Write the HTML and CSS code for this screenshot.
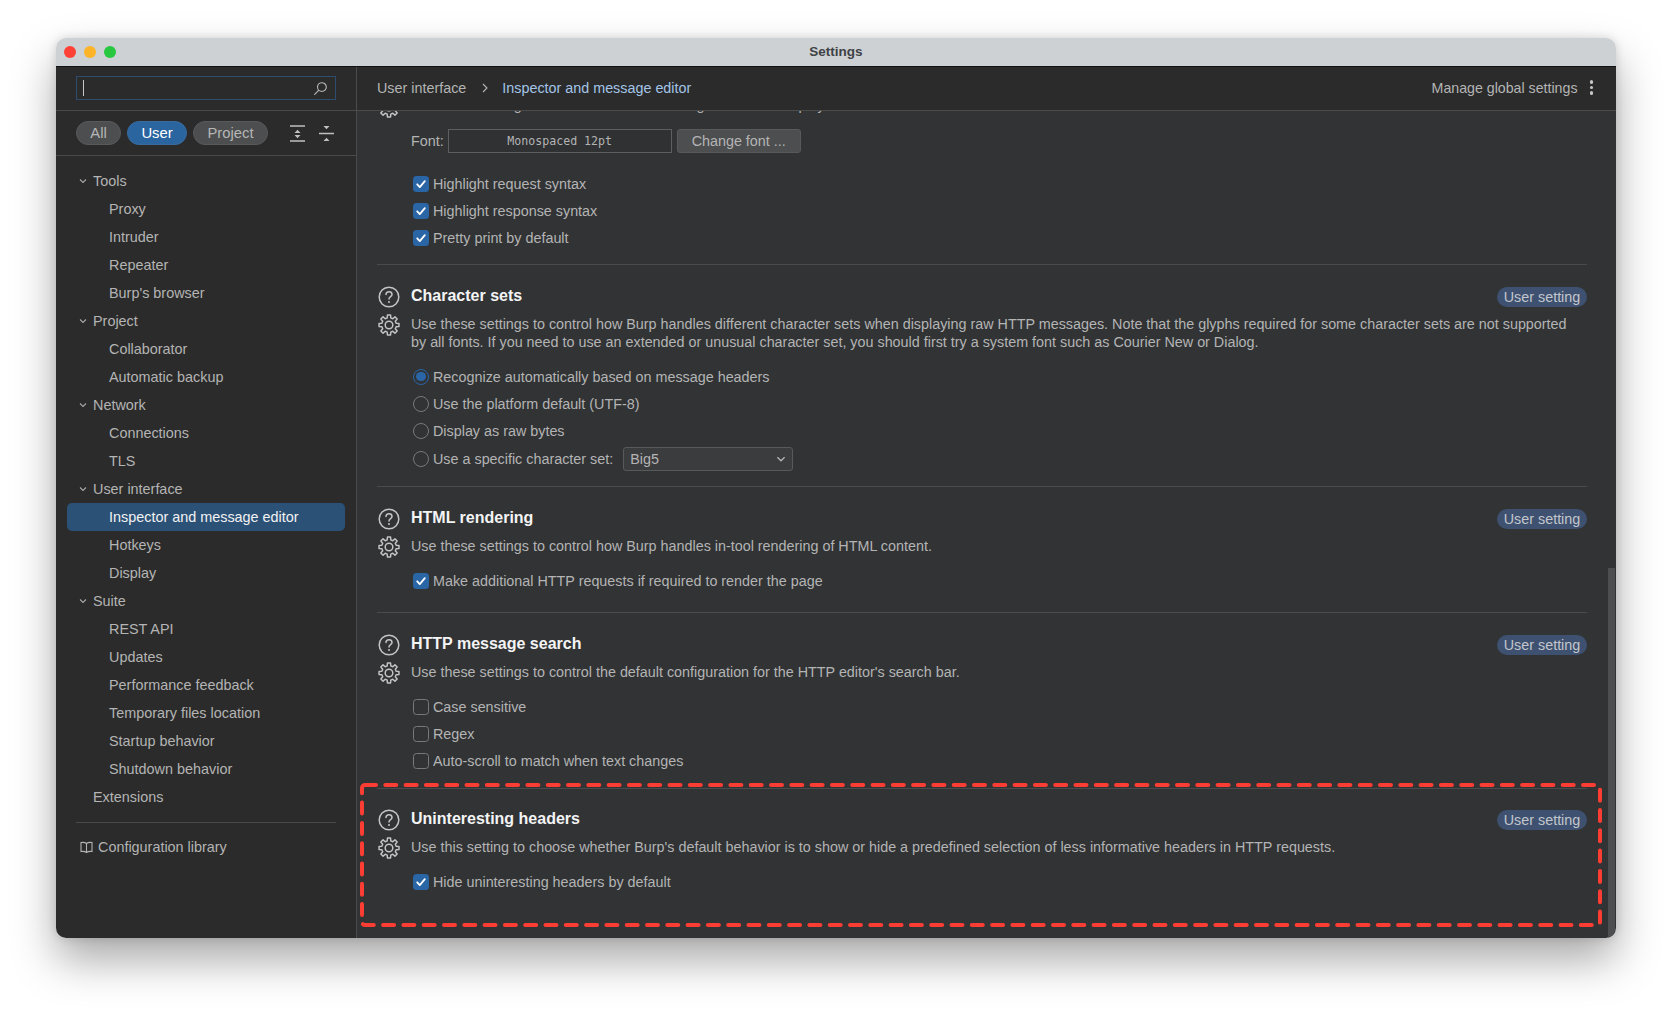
FILE: index.html
```html
<!DOCTYPE html>
<html lang="en">
<head>
<meta charset="utf-8">
<title>Settings</title>
<link rel="stylesheet" href="styles.css">
</head>
<body>
<svg class="defs" width="0" height="0" aria-hidden="true">
  <symbol id="help" viewBox="0 0 22 22">
    <circle cx="11" cy="11" r="9.800" fill="none" stroke="currentColor" stroke-width="1.500"/>
    <path d="M8 8.600c0-1.700 1.300-2.800 3-2.800s3 1.100 3 2.700c0 2.200-3 2.200-3 4.500" fill="none" stroke="currentColor" stroke-width="1.500" stroke-linecap="round"/>
    <circle cx="11" cy="16" r="1" fill="currentColor"/>
  </symbol>
  <symbol id="gear" viewBox="0 0 24 24">
    <circle cx="12" cy="12" r="3.800" fill="none" stroke="currentColor" stroke-width="1.500"/>
    <polygon points="10.060,4.240 10.280,1.130 13.720,1.130 13.940,4.240 16.120,5.140 18.470,3.100 20.900,5.530 18.860,7.890 19.760,10.060 22.870,10.280 22.870,13.720 19.760,13.940 18.860,16.120 20.900,18.470 18.470,20.900 16.120,18.860 13.940,19.760 13.720,22.870 10.280,22.870 10.060,19.760 7.890,18.860 5.530,20.900 3.100,18.470 5.140,16.120 4.240,13.940 1.130,13.720 1.130,10.280 4.240,10.060 5.140,7.890 3.100,5.530 5.530,3.100 7.890,5.140" transform="translate(1 1) scale(.917)" fill="none" stroke="currentColor" stroke-width="1.600" stroke-linejoin="round"/>
  </symbol>
  <symbol id="check" viewBox="0 0 16 16">
    <rect width="16" height="16" rx="3.500" fill="#2a65a6"/>
    <path d="M4.200 8.300l2.600 2.800 5-6" fill="none" stroke="#fff" stroke-width="1.800" stroke-linecap="round" stroke-linejoin="round"/>
  </symbol>
  <symbol id="chev" viewBox="0 0 10 10">
    <path d="M2 3.500l3 3 3-3" fill="none" stroke="currentColor" stroke-width="1.100"/>
  </symbol>
</svg>

<div class="window">
  <header class="titlebar">
    <div class="lights"><span class="light red"></span><span class="light amber"></span><span class="light green"></span></div>
    <div class="title">Settings</div>
  </header>
  <div class="body">
    <aside class="sidebar">
      <div class="search-wrap">
        <div class="search">
          <span class="caret"></span>
          <svg class="search-icon" viewBox="0 0 16 16"><circle cx="9.500" cy="6.500" r="4.700" fill="none" stroke="currentColor" stroke-width="1.200"/><path d="M6 10L1.800 14.200" fill="none" stroke="currentColor" stroke-width="1.300" stroke-linecap="round"/></svg>
        </div>
      </div>
      <div class="filters">
        <span class="pill pill-all">All</span>
        <span class="pill pill-user on">User</span>
        <span class="pill pill-project">Project</span>
        <svg class="tool-icon expand" viewBox="0 0 15 17"><path d="M0 1h15M0 16h15" stroke="currentColor" stroke-width="1.300"/><path d="M7.500 4.800l3 3.200h-6zM7.500 13.200l3-3.200h-6z" fill="currentColor"/></svg>
        <svg class="tool-icon" viewBox="0 0 15 17"><path d="M0 8.500h15" stroke="currentColor" stroke-width="1.300"/><path d="M7.500 4.200l-3-3.200h6zM7.500 12.800l3 3.200h-6z" fill="currentColor"/></svg>
      </div>
      <nav class="tree">
        <div class="node group"><svg class="chev"><use href="#chev"/></svg>Tools</div>
        <div class="node">Proxy</div>
        <div class="node">Intruder</div>
        <div class="node">Repeater</div>
        <div class="node">Burp's browser</div>
        <div class="node group"><svg class="chev"><use href="#chev"/></svg>Project</div>
        <div class="node">Collaborator</div>
        <div class="node">Automatic backup</div>
        <div class="node group"><svg class="chev"><use href="#chev"/></svg>Network</div>
        <div class="node">Connections</div>
        <div class="node">TLS</div>
        <div class="node group"><svg class="chev"><use href="#chev"/></svg>User interface</div>
        <div class="node selected">Inspector and message editor</div>
        <div class="node">Hotkeys</div>
        <div class="node">Display</div>
        <div class="node group"><svg class="chev"><use href="#chev"/></svg>Suite</div>
        <div class="node">REST API</div>
        <div class="node">Updates</div>
        <div class="node">Performance feedback</div>
        <div class="node">Temporary files location</div>
        <div class="node">Startup behavior</div>
        <div class="node">Shutdown behavior</div>
        <div class="node group">Extensions</div>
      </nav>
      <div class="library">
        <svg class="book" viewBox="0 0 13 13"><path d="M6.500 2.500C5 1.300 3 1.200 1 1.500v9c2-.3 4-.2 5.500 1 1.500-1.200 3.500-1.300 5.500-1v-9c-2-.3-4-.2-5.500 1zM6.500 2.500v9" fill="none" stroke="currentColor" stroke-width="1.100"/></svg>
        Configuration library
      </div>
    </aside>
    <main class="main">
      <div class="crumbs">
        <span>User interface</span>
        <svg class="crumb-sep" viewBox="0 0 8 10"><path d="M2 1l4 4-4 4" fill="none" stroke="currentColor" stroke-width="1.100"/></svg>
        <span class="crumb-now">Inspector and message editor</span>
        <span class="manage">Manage global settings</span>
        <span class="dots"><i></i><i></i><i></i></span>
      </div>
      <div class="content">
        <div class="scroll">
          <section class="section first">
            <svg class="clipped-gear"><use href="#gear"/></svg>
            <p class="clipped-desc">Use these settings to control what the message editor will display.</p>
            <div class="font-row">
              <span>Font:</span>
              <span class="font-box">Monospaced 12pt</span>
              <span class="button">Change font ...</span>
            </div>
            <div class="options">
              <label class="opt"><svg class="box"><use href="#check"/></svg>Highlight request syntax</label>
              <label class="opt"><svg class="box"><use href="#check"/></svg>Highlight response syntax</label>
              <label class="opt"><svg class="box"><use href="#check"/></svg>Pretty print by default</label>
            </div>
          </section>

          <section class="section">
            <div class="icons"><svg class="ic-help"><use href="#help"/></svg><svg class="ic-gear"><use href="#gear"/></svg></div>
            <div class="sec-body">
              <div class="sec-head"><h2>Character sets</h2><span class="badge">User setting</span></div>
              <p class="desc">Use these settings to control how Burp handles different character sets when displaying raw HTTP messages. Note that the glyphs required for some character sets are not supported by all fonts. If you need to use an extended or unusual character set, you should first try a system font such as Courier New or Dialog.</p>
              <div class="options tight">
                <label class="opt"><span class="radio on"></span>Recognize automatically based on message headers</label>
                <label class="opt"><span class="radio"></span>Use the platform default (UTF-8)</label>
                <label class="opt"><span class="radio"></span>Display as raw bytes</label>
                <label class="opt opt-select"><span class="radio"></span>Use a specific character set:<span class="select">Big5<svg class="select-chev"><use href="#chev"/></svg></span></label>
              </div>
            </div>
          </section>

          <section class="section html-sec">
            <div class="icons"><svg class="ic-help"><use href="#help"/></svg><svg class="ic-gear"><use href="#gear"/></svg></div>
            <div class="sec-body">
              <div class="sec-head"><h2>HTML rendering</h2><span class="badge">User setting</span></div>
              <p class="desc">Use these settings to control how Burp handles in-tool rendering of HTML content.</p>
              <div class="options">
                <label class="opt"><svg class="box"><use href="#check"/></svg>Make additional HTTP requests if required to render the page</label>
              </div>
            </div>
          </section>

          <section class="section">
            <div class="icons"><svg class="ic-help"><use href="#help"/></svg><svg class="ic-gear"><use href="#gear"/></svg></div>
            <div class="sec-body">
              <div class="sec-head"><h2>HTTP message search</h2><span class="badge">User setting</span></div>
              <p class="desc">Use these settings to control the default configuration for the HTTP editor's search bar.</p>
              <div class="options tight">
                <label class="opt"><span class="unchecked"></span>Case sensitive</label>
                <label class="opt"><span class="unchecked"></span>Regex</label>
                <label class="opt"><span class="unchecked"></span>Auto-scroll to match when text changes</label>
              </div>
            </div>
          </section>

          <section class="section last">
            <div class="icons"><svg class="ic-help"><use href="#help"/></svg><svg class="ic-gear"><use href="#gear"/></svg></div>
            <div class="sec-body">
              <div class="sec-head"><h2>Uninteresting headers</h2><span class="badge">User setting</span></div>
              <p class="desc">Use this setting to choose whether Burp's default behavior is to show or hide a predefined selection of less informative headers in HTTP requests.</p>
              <div class="options">
                <label class="opt"><svg class="box"><use href="#check"/></svg>Hide uninteresting headers by default</label>
              </div>
            </div>
          </section>
        </div>
        <div class="scrollbar"><div class="thumb"></div></div>
      </div>
      <svg class="annotation" viewBox="0 0 1242 144"><rect x="2" y="2" width="1238" height="140" rx="3" fill="none" stroke="#fb3d33" stroke-width="4" stroke-linecap="round" stroke-dasharray="11 9.300"/></svg>
    </main>
  </div>
</div>
</body>
</html>
```
FILE: styles.css
```css
* { box-sizing: border-box; }
html, body { margin: 0; height: 100%; }
body {
  background: #fff;
  padding: 38px 56px 0;
  font-family: "Liberation Sans", Arial, sans-serif;
  font-size: 14.350px;
  color: #b4b4b4;
  overflow: hidden;
}
.defs { position: absolute; }
.window {
  width: 1560px;
  height: 900px;
  border-radius: 10px;
  overflow: hidden;
  display: flex;
  flex-direction: column;
  box-shadow: 0 22px 44px rgba(0, 0, 0, .34), 0 0 10px rgba(0, 0, 0, .14);
}
.titlebar {
  height: 29px;
  flex: none;
  background: #cdd1d4;
  border-bottom: 1px solid #111;
  padding-bottom: 2px;
  display: flex;
  align-items: center;
  justify-content: center;
  position: relative;
}
.lights { position: absolute; left: 8px; top: 8px; display: flex; gap: 8px; }
.light { width: 12px; height: 12px; border-radius: 50%; }
.red { background: #fd4136; }
.amber { background: #fdb428; }
.green { background: #27c73f; }
.title { font-size: 13.500px; font-weight: 700; color: #3f4245; }
.body { flex: 1; display: flex; min-height: 0; position: relative; }

.sidebar {
  width: 301px;
  flex: none;
  background: #2b2b2b;
  border-right: 1px solid #4b4b4b;
  display: flex;
  flex-direction: column;
  font-size: 14.400px;
}
.search-wrap { height: 44px; flex: none; padding: 9px 20px 0; border-bottom: 1px solid #4b4b4b; }
.search {
  height: 24px;
  border: 1px solid #2e4c6e;
  display: flex;
  align-items: center;
  justify-content: space-between;
  padding: 0 7px 0 6px;
}
.caret { width: 1px; height: 16px; background: #c8c8c8; }
.search-icon { width: 15px; height: 15px; color: #b5b5b5; }
.filters {
  height: 45px;
  flex: none;
  padding: 10px 20px 0;
  border-bottom: 1px solid #4b4b4b;
  display: flex;
  align-items: flex-start;
  gap: 6px;
}
.pill {
  height: 24px;
  flex: none;
  border-radius: 12px;
  background: #4c4e50;
  border: 1px solid #58595b;
  display: flex;
  align-items: center;
  justify-content: center;
  font-size: 14.800px;
  color: #b6b6b6;
}
.pill-all { width: 45px; }
.pill-user { width: 60px; }
.pill-project { width: 75px; }
.pill.on { background: #2a65a0; border-color: #3a6c9e; color: #fff; }
.tool-icon { width: 15px; height: 17px; color: #c0c0c0; flex: none; margin: 4px 0 0 8px; }
.tool-icon.expand { margin-left: 16px; }
.tree { padding: 11px 0 0 11px; flex: none; }
.node {
  height: 28px;
  width: 278px;
  padding-left: 42px;
  display: flex;
  align-items: center;
  white-space: nowrap;
}
.node.group { padding-left: 26px; position: relative; }
.chev { position: absolute; left: 11px; top: 9px; width: 10px; height: 10px; color: #a8a8a8; }
.node.selected { background: #2c5177; color: #f2f2f2; border-radius: 5px; }
.library {
  margin: 11px 20px 0;
  border-top: 1px solid #4b4b4b;
  padding: 16px 0 0 4px;
  height: 50px;
  display: flex;
  align-items: flex-start;
  gap: 5px;
}
.book { width: 13px; height: 13px; margin-top: 2px; flex: none; color: #b4b4b4; }

.main { flex: 1; min-width: 0; display: flex; flex-direction: column; background: #313335; }
.crumbs {
  height: 44px;
  flex: none;
  background: #2b2b2b;
  border-bottom: 1px solid #4b4b4b;
  display: flex;
  align-items: center;
  padding: 0 23px 2px 20px;
}
.crumb-sep { width: 8px; height: 10px; margin: 0 13px 0 15px; color: #b4b4b4; }
.crumb-now { color: #a3c4e6; }
.manage { margin-left: auto; font-size: 14.200px; }
.dots { display: flex; flex-direction: column; gap: 2px; margin-left: 12px; width: 3.500px; }
.dots i { width: 3.500px; height: 3.500px; border-radius: 50%; background: #c6c6c6; }
.content { flex: 1; display: flex; min-height: 0; overflow: hidden; }
.scroll { flex: 1; min-width: 0; padding: 0 21px 0 20px; overflow: hidden; }
.scrollbar { width: 8px; flex: none; position: relative; }
.thumb { position: absolute; left: 0; right: 1px; top: 457px; bottom: 0; background: #4c4e50; }

.section {
  display: flex;
  border-top: 1px solid #4a4b4d;
  padding: 21px 0 13px;
}
.section.first { display: block; border-top: 0; padding: 0 0 13px 34px; position: relative; height: 153px; }
.clipped-gear { position: absolute; left: 0; top: -16px; width: 24px; height: 24px; color: #c4c4c4; }
.clipped-desc { position: absolute; left: 34px; top: -15px; margin: 0; line-height: 18px; white-space: nowrap; }
.font-row { display: flex; align-items: center; padding-top: 18px; height: 42px; }
.font-box {
  width: 224px;
  height: 24px;
  margin: 0 5px 0 4px;
  border: 1px solid #5c5e60;
  background: #2f3133;
  font-family: "DejaVu Sans Mono", "Liberation Mono", monospace;
  font-size: 11.600px;
  display: flex;
  align-items: center;
  justify-content: center;
}
.button {
  width: 124px;
  height: 24px;
  border-radius: 3px;
  background: #4c4e50;
  border: 1px solid #58595b;
  display: flex;
  align-items: center;
  justify-content: center;
}
.icons { width: 34px; flex: none; display: flex; flex-direction: column; }
.ic-help { width: 22px; height: 22px; margin-left: 1px; color: #c4c4c4; }
.ic-gear { width: 24px; height: 24px; margin-top: 5px; color: #c4c4c4; }
.sec-body { flex: 1; min-width: 0; }
.sec-head { display: flex; align-items: center; justify-content: space-between; height: 20px; }
h2 { margin: 0; font-size: 16px; font-weight: 700; color: #f4f4f4; }
.badge {
  width: 90px;
  height: 20px;
  border-radius: 10px;
  background: #3f5170;
  color: #c2c6cc;
  display: flex;
  align-items: center;
  justify-content: center;
  margin-top: 2px;
}
.desc { margin: 9px 0 0; line-height: 18px; max-width: 1160px; }
.options { margin-top: 13px; }
.options.tight { margin-top: 12px; }
.first .options { margin-top: 17px; }
.opt { display: flex; align-items: center; height: 27.200px; margin-left: 2px; }
.opt-select { height: 28.200px; }
.box, .radio, .unchecked { width: 16px; height: 16px; flex: none; margin-right: 4px; }
.unchecked { border: 1px solid #77797b; border-radius: 3.500px; }
.radio { border: 1px solid #77797b; border-radius: 50%; }
.radio.on { border: 1.500px solid #2a65a6; position: relative; }
.radio.on::after { content: ""; position: absolute; inset: 2.200px; border-radius: 50%; background: #2a65a6; }
.select {
  width: 170px;
  height: 24px;
  margin-left: 10px;
  border: 1px solid #58595b;
  border-radius: 3px;
  background: #3a3c3e;
  display: flex;
  align-items: center;
  justify-content: space-between;
  padding: 0 5px 0 6px;
}
.select-chev { width: 12px; height: 12px; color: #b4b4b4; }
.html-sec { padding-bottom: 17px; }
.section.last { padding: 20px 0 0; }
.annotation {
  position: absolute;
  left: 304px;
  top: 716px;
  width: 1242px;
  height: 144px;
  pointer-events: none;
}
```
